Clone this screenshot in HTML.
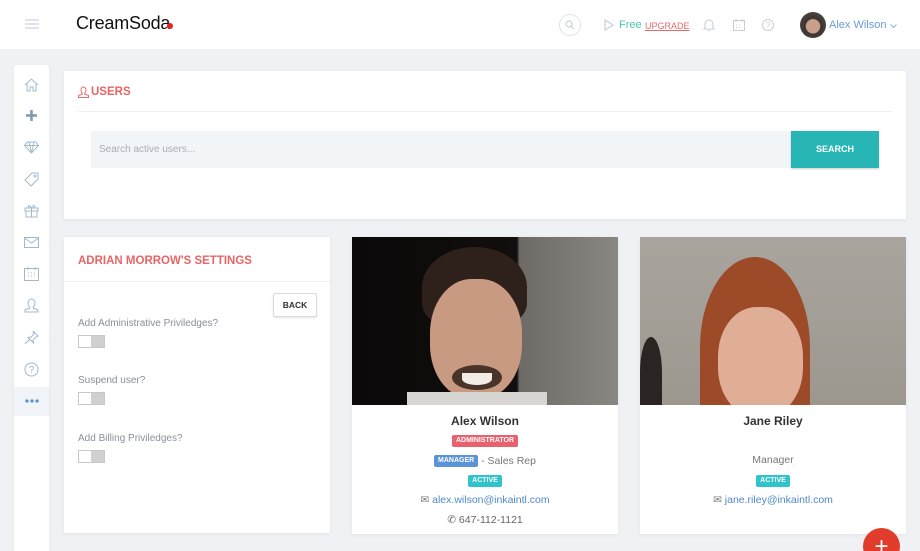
<!DOCTYPE html>
<html><head><style>
*{box-sizing:border-box;margin:0;padding:0}
html,body{width:920px;height:551px;overflow:hidden}
body{background:#eff1f5;font-family:"Liberation Sans",sans-serif;position:relative}
.a{position:absolute}
.card{position:absolute;background:#fff;box-shadow:0 1px 4px rgba(0,0,0,.06)}
svg{overflow:visible}
.lbl{position:absolute;left:14px;font-size:10px;color:#8a8f98}
.tog{position:absolute;left:14px;width:27px;height:13px;background:#d0d0d0;border:1px solid #c8c8c8}
.tog:before{content:"";position:absolute;left:0;top:0;width:12px;height:11px;background:#fff}
.badge{display:inline-block;vertical-align:middle;font-size:7px;line-height:8px;font-weight:bold;color:#fff;padding:2px 4px;border-radius:2px}
.c{position:absolute;left:0;width:100%;text-align:center;height:16px;line-height:16px}
</style></head><body>
<div class="a" style="left:0;top:0;width:920px;height:49px;background:#fff"></div>
<div class="a" style="left:25px;top:19px;width:14px;height:2px;background:#dbe3ec;box-shadow:0 4px 0 #dbe3ec,0 8px 0 #dbe3ec"></div>
<div class="a" style="left:76px;top:13px;font-size:18px;color:#111;letter-spacing:-.2px">CreamSoda</div>
<div class="a" style="left:167px;top:23px;width:6px;height:6px;border-radius:50%;background:#e82020"></div>
<div class="a" style="left:559px;top:14px;width:22px;height:22px;border:1px solid #dde3ea;border-radius:50%"></div>
<svg class="a" style="left:565px;top:20px" width="10" height="10"><circle cx="4" cy="4" r="3" fill="none" stroke="#c6d0dc" stroke-width="1.2"/><path d="M6.5 6.5 9 9" stroke="#c6d0dc" stroke-width="1.2"/></svg>
<svg class="a" style="left:604px;top:19px" width="10" height="12"><path d="M1 1 9 6 1 11Z" fill="none" stroke="#c6d0dc" stroke-width="1.2"/></svg>
<div class="a" style="left:619px;top:19px;font-size:11px;color:#4fc3b0">Free</div>
<div class="a" style="left:645px;top:21px;font-size:9px;color:#e86a6a;text-decoration:underline">UPGRADE</div>
<svg class="a" style="left:703px;top:18px" width="12" height="14"><path d="M2 10V6a4 4 0 0 1 8 0v4l1 1H1z M5 12.5h2" fill="none" stroke="#c6d0dc" stroke-width="1.1"/></svg>
<svg class="a" style="left:733px;top:19px" width="12" height="12"><rect x=".5" y="1.5" width="11" height="10" fill="none" stroke="#c6d0dc"/><path d="M3 0v3M9 0v3M3 6h1M6 6h1M3 8.5h1M6 8.5h1" stroke="#c6d0dc"/></svg>
<svg class="a" style="left:762px;top:19px" width="12" height="12"><circle cx="6" cy="6" r="5.5" fill="none" stroke="#c6d0dc"/><text x="6" y="9" font-size="8" text-anchor="middle" fill="#c6d0dc" font-family="Liberation Sans">?</text></svg>
<div class="a" style="left:800px;top:12px;width:26px;height:26px;border-radius:50%;background:radial-gradient(circle at 50% 55%,#c9a08a 0 35%,#3a3330 40%,#5a5551 100%)"></div>
<div class="a" style="left:829px;top:19px;font-size:11px;color:#6a9bd8">Alex Wilson</div>
<svg class="a" style="left:890px;top:24px" width="7" height="5"><path d="M.5.5 3.5 3.5 6.5.5" fill="none" stroke="#8ab0e0"/></svg>
<div class="card" style="left:14px;top:65px;width:35px;height:486px;border-radius:3px 3px 0 0"></div>
<div class="a" style="left:14px;top:387px;width:35px;height:29px;background:#f0f3f7"></div>
<svg class="a" style="left:24px;top:78px" width="15" height="14" stroke="#a4b8cc" fill="none"><path d="M1 7 7.5 1 14 7M3 5.5V13h3V9h3v4h3V5.5"/></svg>
<svg class="a" style="left:26px;top:110px" width="11" height="11"><path d="M5.5 0v11M0 5.5h11" stroke="#7d98b4" stroke-width="2.5"/></svg>
<svg class="a" style="left:24px;top:141px" width="15" height="13" stroke="#a4b8cc" fill="none"><path d="M3 1h9l2.5 3.5L7.5 12 .5 4.5z M.5 4.5h14M5 1 7.5 12 10 1"/></svg>
<svg class="a" style="left:24px;top:172px" width="15" height="15" stroke="#a4b8cc" fill="none"><path d="M8 1h6v6l-7 7-6-6z"/><circle cx="11" cy="4" r="1"/></svg>
<svg class="a" style="left:24px;top:204px" width="15" height="14" stroke="#a4b8cc" fill="none"><path d="M1 4h13v3H1zM2 7v6h11V7M7.5 4v9M7.5 4C5 0 3 2 5 4M7.5 4c2.5-4 4.5-2 2.5 0"/></svg>
<svg class="a" style="left:24px;top:237px" width="15" height="11" stroke="#a4b8cc" fill="none"><rect x=".5" y=".5" width="14" height="10"/><path d="M.5 1 7.5 6 14.5 1"/></svg>
<svg class="a" style="left:24px;top:267px" width="15" height="14" stroke="#a4b8cc" fill="none"><rect x=".5" y="1.5" width="14" height="12"/><path d="M4 0v3M11 0v3M4 6h1M7 6h1M10 6h1M4 9h1M7 9h1M10 9h1"/></svg>
<svg class="a" style="left:24px;top:298px" width="15" height="15" stroke="#a4b8cc" fill="none"><path d="M4 5a3.5 4 0 0 1 7 0c0 3-2 4-2 5l5 2v2H1v-2l5-2c0-1-2-2-2-5z"/></svg>
<svg class="a" style="left:24px;top:330px" width="15" height="15" stroke="#a4b8cc" fill="none"><path d="M9 1l5 5-2 1-3 3 .5 3L4 7.5l3-.5 3-3zM5.5 9.5 1 14"/></svg>
<svg class="a" style="left:24px;top:362px" width="15" height="15"><circle cx="7.5" cy="7.5" r="6.5" fill="none" stroke="#a4b8cc"/><text x="7.5" y="11" font-size="10" text-anchor="middle" fill="#a4b8cc" font-family="Liberation Sans">?</text></svg>
<svg class="a" style="left:25px;top:399px" width="14" height="4"><circle cx="2" cy="2" r="1.6" fill="#5b8dc6"/><circle cx="7" cy="2" r="1.6" fill="#5b8dc6"/><circle cx="12" cy="2" r="1.6" fill="#5b8dc6"/></svg>
<div class="card" style="left:64px;top:71px;width:842px;height:148px">
<svg class="a" style="left:14px;top:15px" width="11" height="12" stroke="#e87070" fill="none"><path d="M3 4a2.5 3 0 0 1 5 0c0 2.5-1.5 3-1.5 4l4 1.5v2H.5v-2l4-1.5c0-1-1.5-1.5-1.5-4z"/></svg>
<div class="a" style="left:27px;top:15px;font-size:11.5px;font-weight:bold;color:#e86565">USERS</div>
<div class="a" style="left:14px;top:40px;width:814px;height:1px;background:#eceff3"></div>
<div class="a" style="left:27px;top:60px;width:700px;height:37px;background:#f2f5f8"></div>
<div class="a" style="left:35px;top:73px;font-size:10px;color:#a8adb3">Search active users...</div>
<div class="a" style="left:727px;top:60px;width:88px;height:37px;background:#27b5b5;color:#fff;font-size:9px;font-weight:bold;text-align:center;line-height:37px;box-shadow:0 1px 2px rgba(0,0,0,.2)">SEARCH</div>
</div>
<div class="card" style="left:64px;top:237px;width:266px;height:296px">
<div class="a" style="left:14px;top:18px;font-size:11.5px;font-weight:bold;color:#e86565">ADRIAN MORROW'S SETTINGS</div>
<div class="a" style="left:0;top:44px;width:266px;height:1px;background:#eceff3"></div>
<div class="a" style="left:209px;top:56px;width:44px;height:24px;border:1px solid #d8dbe0;border-radius:2px;box-shadow:0 1px 2px rgba(0,0,0,.1);font-size:8.5px;font-weight:bold;color:#333;text-align:center;line-height:22px">BACK</div>
<div class="lbl" style="top:81px">Add Administrative Priviledges?</div>
<div class="tog" style="top:98px"></div>
<div class="lbl" style="top:138px">Suspend user?</div>
<div class="tog" style="top:155px"></div>
<div class="lbl" style="top:196px">Add Billing Priviledges?</div>
<div class="tog" style="top:213px"></div>
</div>
<div class="card" style="left:352px;top:237px;width:266px;height:297px">
<div class="a" style="left:0;top:0;width:266px;height:168px;overflow:hidden;background:linear-gradient(90deg,#0b0909 0,#110e0d 62%,#6e6b67 63%,#8a8783 100%)">
<div class="a" style="left:70px;top:10px;width:105px;height:80px;border-radius:50% 50% 30% 30%;background:#2e211b"></div>
<div class="a" style="left:78px;top:42px;width:92px;height:120px;border-radius:45%;background:#c99a82"></div>
<div class="a" style="left:100px;top:128px;width:50px;height:25px;border-radius:50%;background:#4a3328"></div>
<div class="a" style="left:110px;top:136px;width:30px;height:12px;border-radius:0 0 50% 50%;background:#f2ece6"></div>
<div class="a" style="left:55px;top:155px;width:140px;height:20px;background:#d8d6d2"></div>
</div>
<div class="c" style="top:176px;font-size:12px;font-weight:bold;color:#333">Alex Wilson</div>
<div class="c" style="top:196px"><span class="badge" style="background:#e9606e">ADMINISTRATOR</span></div>
<div class="c" style="top:216px;font-size:10.5px;color:#777"><span class="badge" style="background:#5b93d8">MANAGER</span> - Sales Rep</div>
<div class="c" style="top:236px"><span class="badge" style="background:#2fc4cc">ACTIVE</span></div>
<div class="c" style="top:255px;font-size:10.5px;color:#4e89c9"><span style="color:#777">✉</span> alex.wilson@inkaintl.com</div>
<div class="c" style="top:275px;font-size:10.5px;color:#666">✆ 647-112-1121</div>
</div>
<div class="card" style="left:640px;top:237px;width:266px;height:297px">
<div class="a" style="left:0;top:0;width:266px;height:168px;overflow:hidden;background:linear-gradient(180deg,#a9a59e,#9c978f)">
<div class="a" style="left:0;top:100px;width:22px;height:70px;border-radius:50% 50% 0 0;background:#2a2522"></div>
<div class="a" style="left:60px;top:20px;width:110px;height:180px;border-radius:50% 50% 10% 10%;background:#9c4a28"></div>
<div class="a" style="left:78px;top:70px;width:85px;height:110px;border-radius:45%;background:#e0ad96"></div>
</div>
<div class="c" style="top:176px;font-size:12px;font-weight:bold;color:#333">Jane Riley</div>
<div class="c" style="top:215px;font-size:10.5px;color:#777">Manager</div>
<div class="c" style="top:236px"><span class="badge" style="background:#2fc4cc">ACTIVE</span></div>
<div class="c" style="top:255px;font-size:10.5px;color:#4e89c9"><span style="color:#777">✉</span> jane.riley@inkaintl.com</div>
</div>
<div class="a" style="left:863px;top:528px;width:37px;height:37px;border-radius:50%;background:#e23c2c;color:#fff;font-size:24px;text-align:center;line-height:37px">+</div>
</body></html>
